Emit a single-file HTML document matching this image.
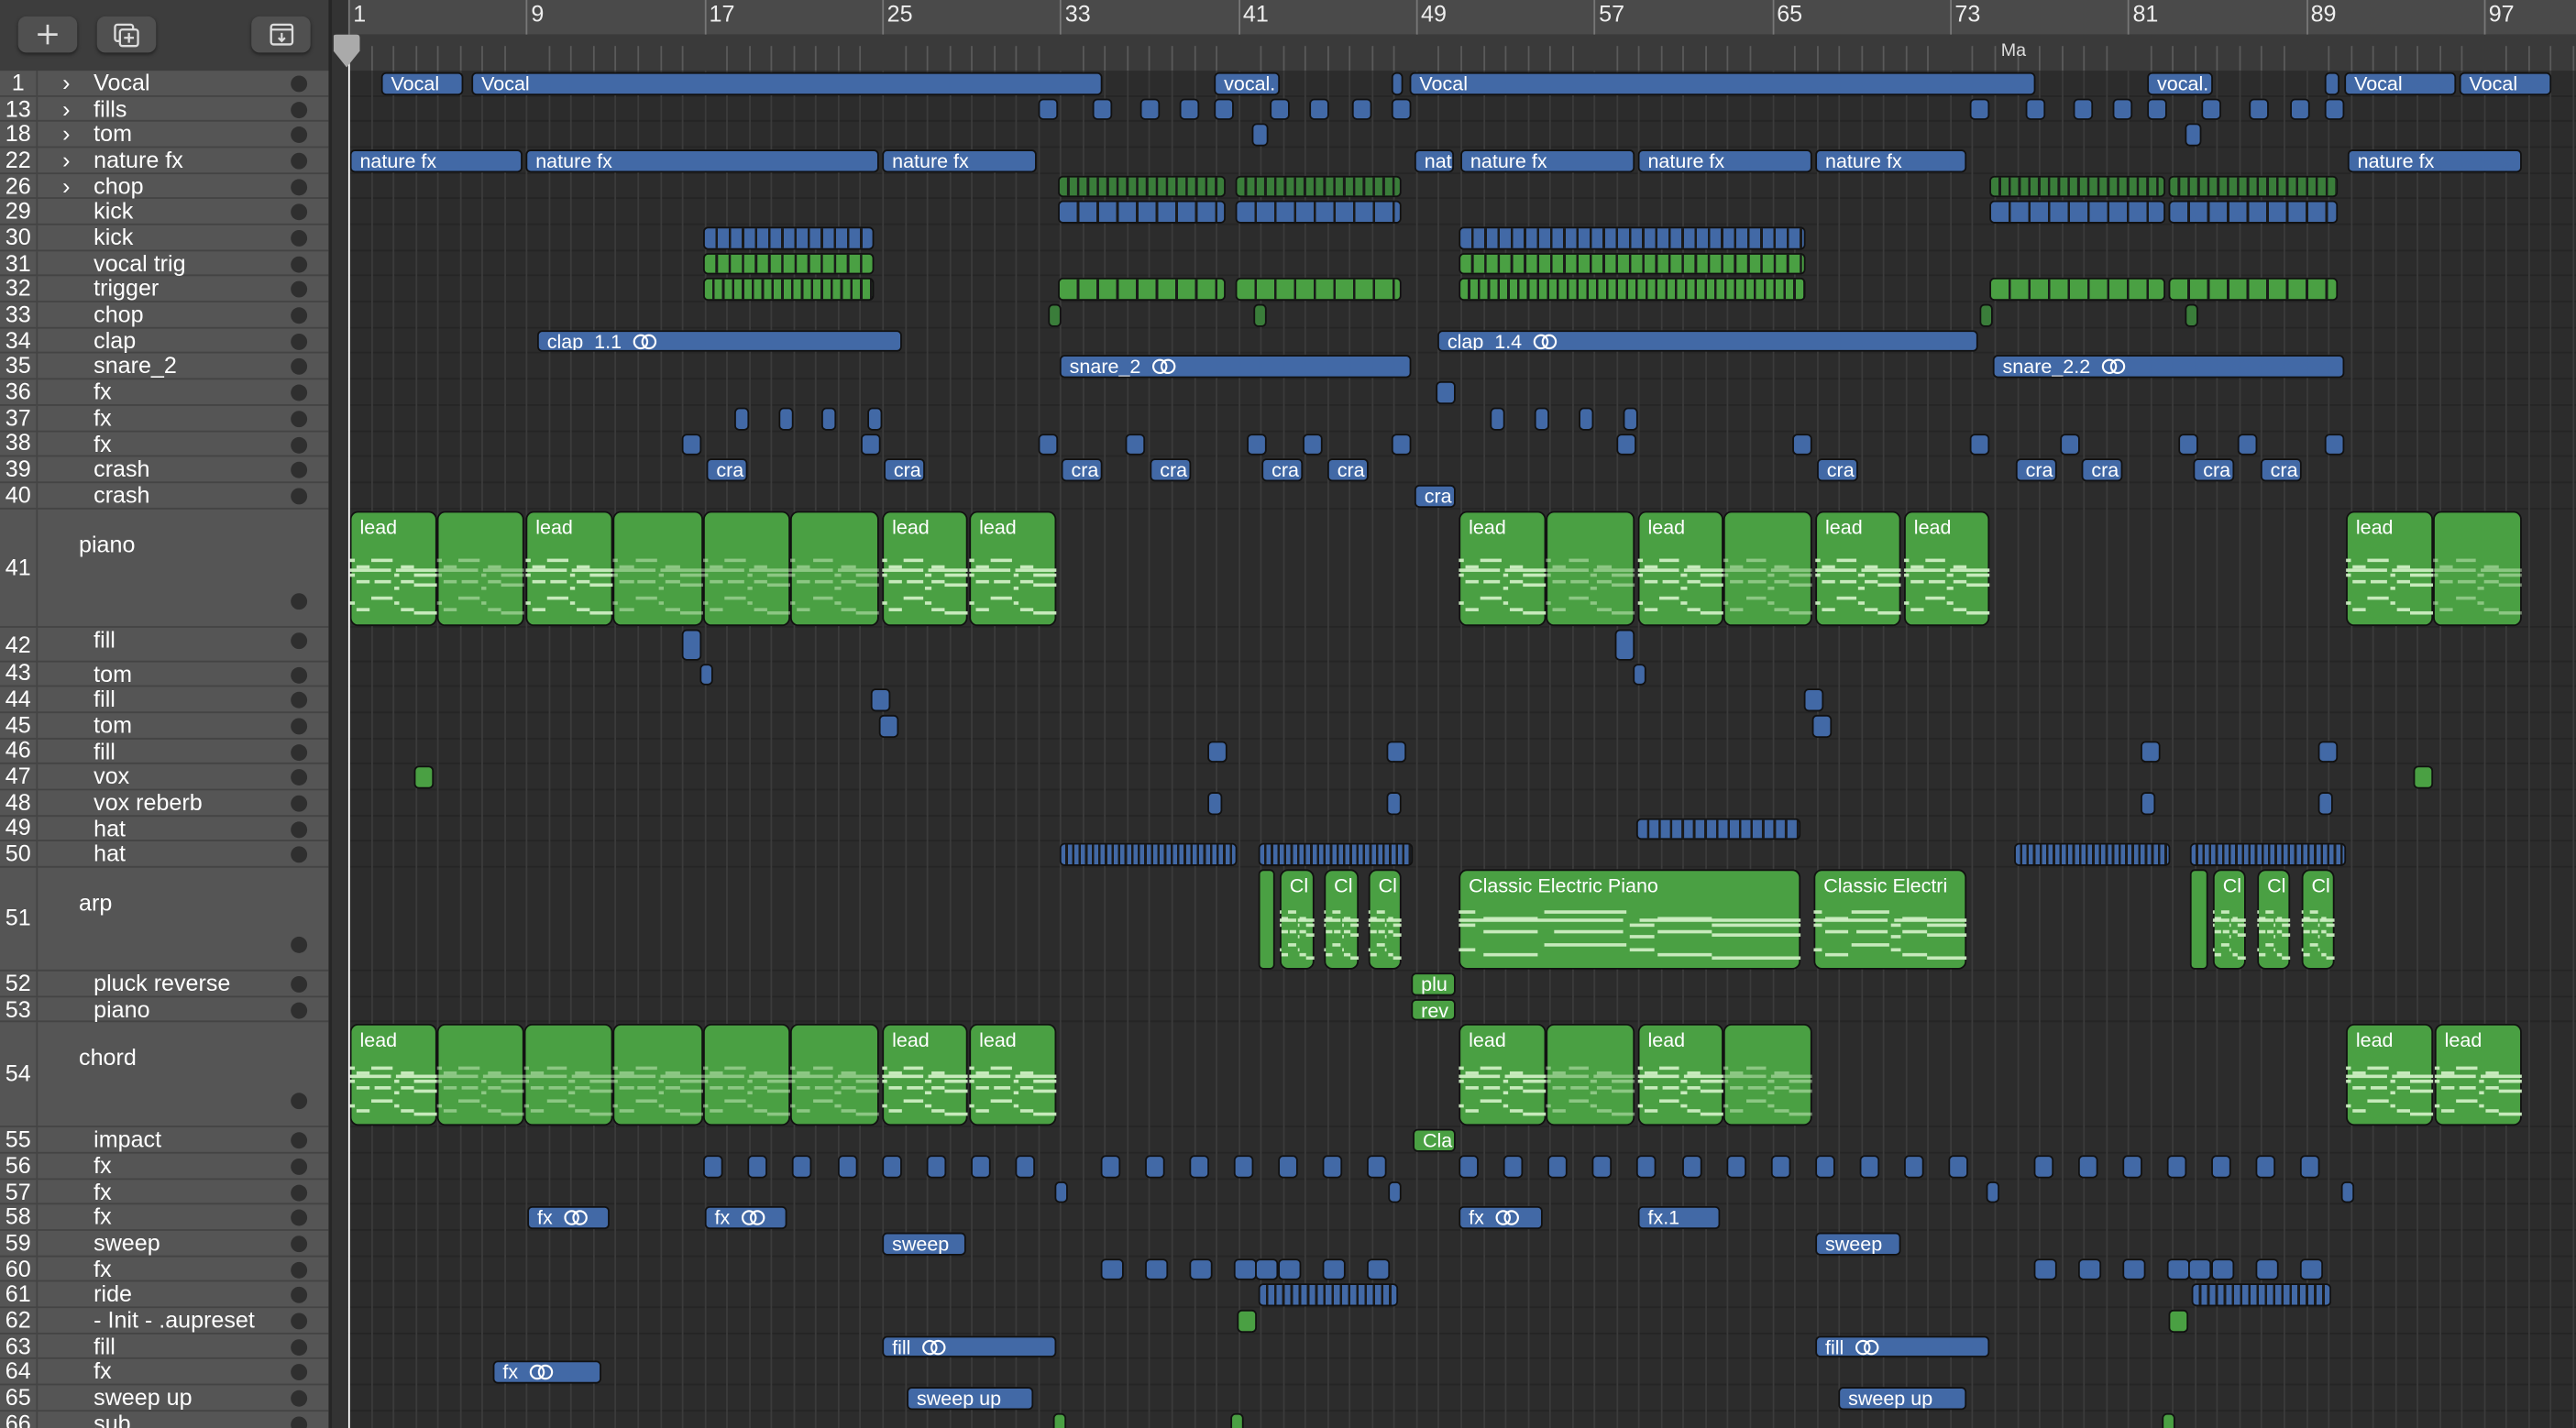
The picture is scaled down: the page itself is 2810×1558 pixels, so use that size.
<!DOCTYPE html>
<html><head><meta charset="utf-8"><style>
html,body{margin:0;padding:0;background:#2c2c2c;width:2810px;height:1558px;overflow:hidden}
#s{position:absolute;left:0;top:0;width:1568px;height:869px;transform:scale(1.79209,1.79287);transform-origin:0 0;font-family:"Liberation Sans",sans-serif;overflow:hidden;background:#2c2c2c}
.a{position:absolute}
.r{position:absolute;box-sizing:border-box;border:1px solid #111;border-radius:3px;color:#fff;font-size:12px;line-height:13px;padding-left:5px;white-space:nowrap;overflow:hidden}
.b{background:#4269a6}.g{background:#4aa043}.dg{background:#3a7d3a}
.tn{position:absolute;left:0;width:22px;text-align:center;color:#fff;font-size:14px}
.tl{position:absolute;color:#fff;font-size:14px}
.dot{position:absolute;left:177px;width:10px;height:10px;border-radius:50%;background:#2f2f2f}
.btn{position:absolute;top:10px;height:22px;width:36px;border-radius:5px;background:#505050;box-shadow:0 1px 2px #222}
</style></head><body><div id="s">
<div class="a" style="left:0;top:0;width:202px;height:43px;background:#3d3d3d"></div>
<div class="btn" style="left:11px"><svg width="36" height="22"><path d="M18 5v12M12 11h12" stroke="#ddd" stroke-width="1.5"/></svg></div>
<div class="btn" style="left:59px"><svg width="36" height="22"><rect x="11" y="5" width="11" height="10" rx="1.5" fill="none" stroke="#ddd" stroke-width="1.3"/><rect x="14" y="8" width="11" height="10" rx="1.5" fill="#505050" stroke="#ddd" stroke-width="1.3"/><path d="M19.5 10v6M16.5 13h6" stroke="#ddd" stroke-width="1.3"/></svg></div>
<div class="btn" style="left:153px"><svg width="36" height="22"><rect x="12" y="5" width="13" height="12" rx="1.5" fill="none" stroke="#ddd" stroke-width="1.3"/><path d="M12 8h13M18.5 10v5M16.5 13l2 2 2-2" stroke="#ddd" stroke-width="1.2" fill="none"/></svg></div>
<div class="a" style="left:202px;top:0;width:10px;height:869px;background:#333"></div>
<div class="a" style="left:200px;top:0;width:2px;height:869px;background:#262626"></div>
<div class="a" style="left:212px;top:0;width:1356px;height:21px;background:#4a4a4a"></div>
<div class="a" style="left:212px;top:21px;width:1356px;height:22px;background:#3a3a3a"></div>
<div id="tracks"></div><div id="arr"></div>
<div class="a" style="left:212px;top:22px;width:1px;height:847px;background:#fff"></div>
<svg class="a" style="left:203px;top:21px" width="18" height="22"><path d="M0 1q0-1 2-1h12q2 0 2 2v8l-8 10-8-10z" fill="#aaa"/></svg>
</div>
<script>
(function(){
var T=document.getElementById('tracks'),A=document.getElementById('arr');
var tr=[[1,'Vocal',1,1],[13,'fills',1,1],[18,'tom',1,1],[22,'nature fx',1,1],[26,'chop',1,1],[29,'kick',0,1],[30,'kick',0,1],[31,'vocal trig',0,1],[32,'trigger',0,1],[33,'chop',0,1],[34,'clap',0,1],[35,'snare_2',0,1],[36,'fx',0,1],[37,'fx',0,1],[38,'fx',0,1],[39,'crash',0,1],[40,'crash',0,1],[41,'piano',0,4.65],[42,'fill',0,1.28],[43,'tom',0,1],[44,'fill',0,1],[45,'tom',0,1],[46,'fill',0,1],[47,'vox',0,1],[48,'vox reberb',0,1],[49,'hat',0,1],[50,'hat',0,1],[51,'arp',0,4.02],[52,'pluck reverse',0,1],[53,'piano',0,1],[54,'chord',0,4.08],[55,'impact',0,1],[56,'fx',0,1],[57,'fx',0,1],[58,'fx',0,1],[59,'sweep',0,1],[60,'fx',0,1],[61,'ride',0,1],[62,'- Init - .aupreset',0,1],[63,'fill',0,1],[64,'fx',0,1],[65,'sweep up',0,1],[66,'sub',0,1]];
var RH=15.68,y=43,TOP={},HH={},h='',ah='';
tr.forEach(function(t){var H=t[3]*RH;TOP[t[0]]=y;HH[t[0]]=H;
h+='<div class="a" style="left:0;top:'+y+'px;width:200px;height:'+H+'px;background:#555;border-bottom:1px solid #444;box-sizing:border-box"></div><div class="a" style="left:22px;top:'+y+'px;width:1px;height:'+H+'px;background:#444"></div>';
var big=t[3]>2;
h+='<div class="tn" style="top:'+(y+H/2-9)+'px">'+t[0]+'</div>';
if(t[2])h+='<div class="tl" style="left:38px;top:'+(y-1)+'px">&#x203A;</div>';
h+='<div class="tl" style="left:'+(big?48:57)+'px;top:'+(big?y+13:y-1)+'px">'+t[1]+'</div>';
h+='<div class="dot" style="top:'+(big?y+H-21:y+3)+'px"></div>';
ah+='<div class="a" style="left:212px;top:'+(y+H-1)+'px;width:1356px;height:1px;background:#252525"></div>';
y+=H;});
T.innerHTML=h;
var X0=212,BW=13.54;
for(var i=0;i<101;i++){var x=X0+i*BW,m=i%8==0;
ah+='<div class="a" style="left:'+x+'px;top:'+(m?0:28)+'px;width:1px;height:'+(m?21:15)+'px;background:'+(m?'#777':'#5a5a5a')+'"></div>';
ah+='<div class="a" style="left:'+x+'px;top:43px;width:1px;height:826px;background:#3b3b3b"></div>';
if(m)ah+='<div class="a" style="left:'+(x+3)+'px;top:0;color:#eee;font-size:14px">'+(i+1)+'</div>';}
ah+='<div class="a" style="left:1218px;top:25px;color:#ddd;font-size:11px">Ma</div>';
function R(row,x1,x2,c,l,st){var t=TOP[row]+1,H=HH[row]-2;return '<div class="r '+c+'" style="left:'+x1+'px;top:'+t+'px;width:'+(x2-x1)+'px;height:'+H+'px'+(st?';'+st:'')+'">'+(l||'')+'</div>';}
var L='<svg width="18" height="10" style="margin-left:6px;vertical-align:-1px"><circle cx="6" cy="5" r="4" fill="none" stroke="#fff" stroke-width="1.2"/><circle cx="11" cy="5" r="4" fill="none" stroke="#fff" stroke-width="1.2"/></svg>';
function add(row,c,list){list.forEach(function(e){ah+=R(row,e[0],e[1],c,e[2]||'');});}
function sq(row,c,xs,w){xs.forEach(function(x){ah+=R(row,x,x+(w||12),c,'');});}
function dense(row,c,x1,x2,step){ah+=R(row,x1,x2,c,'','background-image:repeating-linear-gradient(90deg,transparent 0 '+(step-1.5)+'px,#1a1a1a '+(step-1.5)+'px '+step+'px)');}
add(1,'b',[[232,282,'Vocal'],[287,671,'Vocal'],[739,779,'vocal.'],[847,854],[858,1239,'Vocal'],[1307,1347,'vocal.'],[1415,1424],[1427,1495,'Vocal'],[1497,1553,'Vocal']]);
sq(13,'b',[632,665,694,718,739,773,797,823,847,1199,1233,1262,1286,1307,1340,1369,1394,1415]);
sq(18,'b',[762,1330],10);
add(22,'b',[[213,318,'nature fx'],[320,535,'nature fx'],[537,631,'nature fx'],[861,885,'nat'],[889,995,'nature fx'],[997,1103,'nature fx'],[1105,1197,'nature fx'],[1429,1535,'nature fx']]);
[[644,746],[752,853],[1211,1318],[1320,1423]].forEach(function(p){dense(26,'dg',p[0],p[1],6);dense(29,'b',p[0],p[1],12);dense(32,'g',p[0],p[1],12);});
[[428,532],[888,1099]].forEach(function(p){dense(30,'b',p[0],p[1],8);dense(31,'g',p[0],p[1],8);dense(32,'g',p[0],p[1],6);});
sq(33,'dg',[638,763,1205,1330],8);
add(34,'b',[[327,549,'clap_1.1'+L],[875,1204,'clap_1.4'+L]]);
add(35,'b',[[645,859,'snare_2'+L],[1213,1427,'snare_2.2'+L]]);
sq(36,'b',[874]);
sq(37,'b',[447,474,500,528,907,934,961,988],9);
sq(38,'b',[415,524,632,685,759,793,847,984,1091,1199,1254,1326,1362,1415]);
[430,538,646,700,768,808,1106,1227,1267,1335,1376].forEach(function(x){ah+=R(39,x,x+25,'b','cra');});
ah+=R(40,861,886,'b','cra');
var P=[[0,.42,.05],[.25,.42,.24],[.07,.47,.16],[.58,.47,.16],[0,.5,.48],[.53,.5,.47],[0,.54,.05],[.5,.54,.07],[.74,.54,.26],[.07,.6,.16],[.28,.6,.2],[.58,.6,.16],[.74,.63,.26],[.5,.65,.07],[.25,.73,.24],[0,.78,.05],[.5,.78,.07],[.07,.83,.16],[.58,.83,.16],[.74,.86,.26]];
function notes(x1,x2,t0,H,op){var s='',w=x2-x1;P.forEach(function(p){s+='<div class="a" style="left:'+(x1+p[0]*w)+'px;top:'+(t0+p[1]*H)+'px;width:'+(p[2]*w)+'px;height:2px;background:#cdeec3;opacity:'+op+'"></div>';});return s;}
function bigR(row,segs){segs.forEach(function(e){ah+=R(row,e[0],e[1],'g',e[2]||'','border-radius:5px;padding-top:3px');ah+=notes(e[0],e[1],TOP[row],HH[row],e[2]?0.95:0.5);});}
bigR(41,[[213,266,'lead'],[266,319],[320,373,'lead'],[373,428],[428,481],[481,535],[537,589,'lead'],[590,643,'lead'],[888,941,'lead'],[941,995],[997,1049,'lead'],[1049,1103],[1105,1157,'lead'],[1159,1211,'lead'],[1428,1481,'lead'],[1481,1535]]);
sq(42,'b',[415,983]);sq(43,'b',[426,994],8);sq(44,'b',[530,1098]);sq(45,'b',[535,1103]);
sq(46,'b',[735,844,1303,1411]);sq(47,'g',[252,1469]);sq(48,'b',[735,844,1303,1411],9);
dense(49,'b',996,1096,7);
[[645,753],[766,860],[1226,1321],[1333,1428]].forEach(function(p){dense(50,'b',p[0],p[1],4);});
ah+=R(51,766,776,'g','');ah+=R(51,1333,1344,'g','');
bigR(51,[[779,800,'Cl'],[806,827,'Cl'],[833,853,'Cl'],[888,1096,'Classic Electric Piano'],[1104,1197,'Classic Electri'],[1347,1367,'Cl'],[1374,1394,'Cl'],[1401,1421,'Cl']]);
ah+=R(52,859,886,'g','plu');ah+=R(53,859,886,'g','rev');
bigR(54,[[213,266,'lead'],[266,319],[319,373],[373,428],[428,481],[481,535],[537,589,'lead'],[590,643,'lead'],[888,941,'lead'],[941,995],[997,1049,'lead'],[1049,1103],[1428,1481,'lead'],[1482,1535,'lead']]);
ah+=R(55,860,886,'g','Cla');
var xs=[],x;for(x=428;x<=632;x+=27.2)xs.push(x);for(x=670;x<=835;x+=27)xs.push(x);for(x=888;x<=1200;x+=27.1)xs.push(x);for(x=1238;x<=1405;x+=27)xs.push(x);
sq(56,'b',xs);sq(57,'b',[642,845,1209,1425],8);
add(58,'b',[[321,371,'fx'+L],[429,479,'fx'+L],[888,939,'fx'+L],[997,1047,'fx.1']]);
add(59,'b',[[537,588,'sweep'],[1105,1157,'sweep']]);
sq(60,'b',[670,697,724,751,764,778,805,832,1238,1265,1292,1319,1332,1346,1373,1400],14);
dense(61,'b',766,851,5);dense(61,'b',1334,1419,5);
sq(62,'g',[753,1320]);
add(63,'b',[[537,643,'fill'+L],[1105,1211,'fill'+L]]);
add(64,'b',[[300,366,'fx'+L]]);
add(65,'b',[[552,629,'sweep up'],[1119,1197,'sweep up']]);
sq(66,'g',[641,749,1316],8);
A.innerHTML=ah;
})();
</script></body></html>
